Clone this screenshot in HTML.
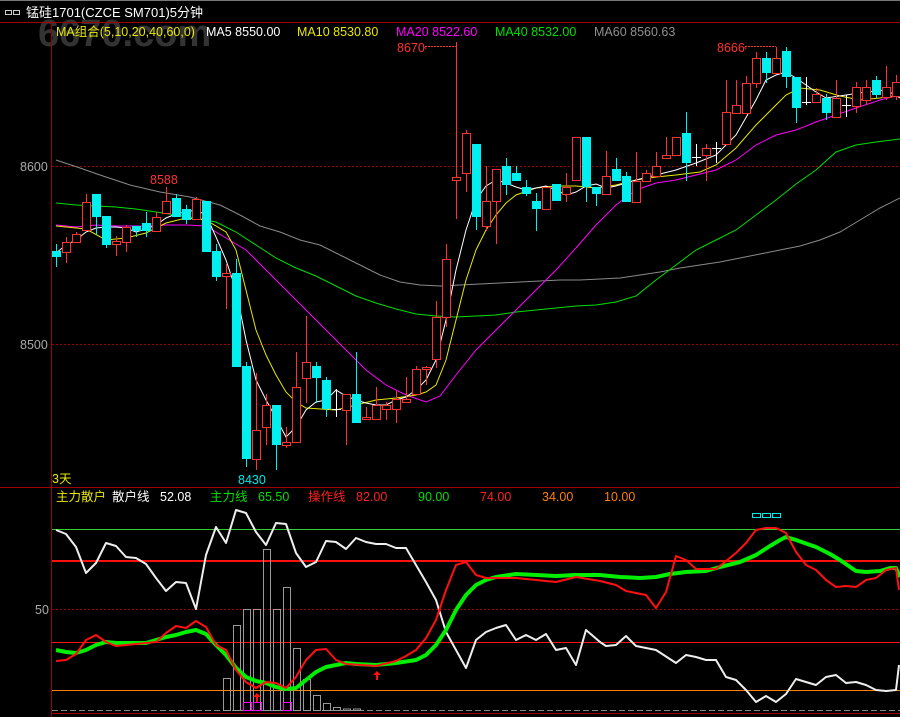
<!DOCTYPE html>
<html><head><meta charset="utf-8"><style>
html,body{margin:0;padding:0;background:#000;width:900px;height:717px;overflow:hidden}
svg{display:block}
text{font-family:"Liberation Sans","Noto Sans CJK SC",sans-serif;font-size:12.5px}
</style></head><body>
<svg width="900" height="717" viewBox="0 0 900 717" xmlns="http://www.w3.org/2000/svg">
<rect width="900" height="717" fill="#000"/>
<text x="38" y="46" fill="#333" style="font-size:38px;font-weight:bold">6670.com</text>
<rect x="0" y="0" width="900" height="1" fill="#777"/>
<g fill="none" stroke="#ccc"><rect x="5.5" y="10.5" width="6" height="4"/><rect x="13.5" y="10.5" width="6" height="4"/></g>
<text x="26" y="17" fill="#fff" style="font-size:13px">锰硅1701(CZCE SM701)5分钟</text>
<rect x="0" y="22" width="900" height="1" fill="#a00000"/>
<rect x="51" y="22" width="1" height="695" fill="#a00000"/>
<rect x="0" y="487" width="900" height="1" fill="#a00000"/>
<rect x="51" y="713" width="849" height="1" fill="#a00000"/>
<text x="56" y="36" fill="#e8e800">MA组合(5,10,20,40,60,0)</text>
<text x="206" y="36" fill="#fff">MA5 8550.00</text>
<text x="297" y="36" fill="#e8e800">MA10 8530.80</text>
<text x="396" y="36" fill="#ff00ff">MA20 8522.60</text>
<text x="495" y="36" fill="#00e000">MA40 8532.00</text>
<text x="594" y="36" fill="#909090">MA60 8560.63</text>
<g stroke="#a00000" stroke-dasharray="2,2">
<line x1="52" y1="166.5" x2="900" y2="166.5"/><line x1="52" y1="344.5" x2="900" y2="344.5"/>
<line x1="52" y1="609.5" x2="900" y2="609.5"/>
</g>
<text x="20" y="171" fill="#aaa">8600</text>
<text x="20" y="349" fill="#aaa">8500</text>
<text x="35" y="614" fill="#aaa">50</text>
<g fill="none" stroke-width="1">
<polyline stroke="#8a8a8a" points="56,160 80,168 100,175 130,185 160,192 190,197 220,205 240,215 260,226 280,232 300,240 320,245 340,255 360,265 380,275 400,282 420,285 440,286 460,285 480,284 500,283 520,282 540,281 560,280 580,280 600,279 620,278 640,275 660,272 680,268 700,265 720,262 740,258 760,254 780,250 800,246 820,240 840,232 860,220 880,208 900,198"/>
<polyline stroke="#00e000" points="56,203 76,205 96,206 116,207 136,209 156,212 176,215 196,218 216,222 236,232 256,245 276,258 296,268 316,276 336,286 356,296 376,303 396,309 416,314 436,316 456,317 476,316 496,315 516,312 536,310 556,308 576,306 596,305 616,302 636,296 656,280 676,265 696,250 716,240 736,230 756,215 776,200 796,184 816,170 836,152 856,145 876,142 900,139"/>
<polyline stroke="#ff00ff" points="56,225 76,227 96,225 116,226 146,226 166,225 186,225 206,226 216,232 226,238 246,250 266,270 286,290 306,310 326,330 346,350 366,370 386,385 406,395 426,402 440,396 456,375 476,350 496,330 516,310 536,290 556,270 576,248 596,225 616,205 636,190 656,183 676,180 696,175 716,170 736,160 756,145 776,135 796,130 816,122 836,115 856,108 880,100 900,95"/>
<polyline stroke="#e8e800" points="56,226 86,229 106,240 126,238 146,233 166,223 186,218 206,220 226,232 236,250 246,290 256,330 266,355 276,375 286,392 296,402 306,408 336,410 356,405 376,400 396,398 416,395 426,392 436,385 446,360 456,320 466,280 476,250 486,230 496,215 506,203 516,195 536,188 556,186 576,186 596,188 616,185 636,180 656,177 676,175 700,172 716,165 736,148 756,125 776,105 786,95 800,88 820,90 840,96 860,100 880,98 900,95"/>
<polyline stroke="#fff" points="56,253 66,245 76,240 86,232 96,228 106,227 116,227 126,228 136,232 146,229 156,225 166,218 176,214 186,212 196,210 206,215 216,237 226,260 236,290 246,340 256,380 266,400 276,418 286,437 296,427 306,410 316,402 326,400 336,390 346,396 356,400 366,403 376,405 386,405 396,400 406,397 416,390 426,380 436,360 446,320 456,270 466,230 476,200 486,186 496,180 506,183 516,187 526,190 536,188 546,186 556,190 566,195 576,192 586,186 596,184 606,188 616,186 636,180 656,175 676,170 696,163 716,155 736,135 756,100 766,80 776,75 786,72 796,78 806,85 816,92 826,98 846,95 866,92 886,90 900,98"/>
</g>
<g shape-rendering="crispEdges">
<g stroke="#00f0f0" fill="#00f0f0">
<line x1="56.5" y1="244" x2="56.5" y2="267"/><rect x="52.5" y="251.5" width="8" height="5"/>
<line x1="96.5" y1="194" x2="96.5" y2="235"/><rect x="92.5" y="194.5" width="8" height="22"/>
<line x1="106.5" y1="216" x2="106.5" y2="248"/><rect x="102.5" y="216.5" width="8" height="28"/>
<line x1="136.5" y1="226" x2="136.5" y2="237"/><rect x="132.5" y="226.5" width="8" height="4"/>
<line x1="146.5" y1="212" x2="146.5" y2="237"/><rect x="142.5" y="223.5" width="8" height="7"/>
<line x1="176.5" y1="194" x2="176.5" y2="217"/><rect x="172.5" y="198.5" width="8" height="18"/>
<line x1="186.5" y1="205" x2="186.5" y2="224"/><rect x="182.5" y="209.5" width="8" height="10"/>
<line x1="206.5" y1="201" x2="206.5" y2="252"/><rect x="202.5" y="201.5" width="8" height="50"/>
<line x1="216.5" y1="244" x2="216.5" y2="281"/><rect x="212.5" y="251.5" width="8" height="25"/>
<line x1="236.5" y1="259" x2="236.5" y2="367"/><rect x="232.5" y="273.5" width="8" height="93"/>
<line x1="246.5" y1="362" x2="246.5" y2="467"/><rect x="242.5" y="366.5" width="8" height="92"/>
<line x1="276.5" y1="405" x2="276.5" y2="470"/><rect x="272.5" y="405.5" width="8" height="39"/>
<line x1="316.5" y1="362" x2="316.5" y2="403"/><rect x="312.5" y="366.5" width="8" height="11"/>
<line x1="326.5" y1="377" x2="326.5" y2="417"/><rect x="322.5" y="380.5" width="8" height="28"/>
<line x1="356.5" y1="352" x2="356.5" y2="423"/><rect x="352.5" y="394.5" width="8" height="28"/>
<line x1="476.5" y1="144" x2="476.5" y2="230"/><rect x="472.5" y="144.5" width="8" height="72"/>
<line x1="506.5" y1="158" x2="506.5" y2="195"/><rect x="502.5" y="166.5" width="8" height="18"/>
<line x1="516.5" y1="166" x2="516.5" y2="181"/><rect x="512.5" y="173.5" width="8" height="7"/>
<line x1="526.5" y1="180" x2="526.5" y2="196"/><rect x="522.5" y="187.5" width="8" height="6"/>
<line x1="536.5" y1="193" x2="536.5" y2="231"/><rect x="532.5" y="201.5" width="8" height="7"/>
<line x1="556.5" y1="184" x2="556.5" y2="201"/><rect x="552.5" y="184.5" width="8" height="16"/>
<line x1="586.5" y1="137" x2="586.5" y2="202"/><rect x="582.5" y="137.5" width="8" height="49"/>
<line x1="596.5" y1="187" x2="596.5" y2="206"/><rect x="592.5" y="187.5" width="8" height="6"/>
<line x1="616.5" y1="158" x2="616.5" y2="181"/><rect x="612.5" y="169.5" width="8" height="11"/>
<line x1="626.5" y1="172" x2="626.5" y2="202"/><rect x="622.5" y="176.5" width="8" height="25"/>
<line x1="686.5" y1="112" x2="686.5" y2="181"/><rect x="682.5" y="133.5" width="8" height="29"/>
<line x1="766.5" y1="52" x2="766.5" y2="83"/><rect x="762.5" y="58.5" width="8" height="14"/>
<line x1="786.5" y1="47" x2="786.5" y2="88"/><rect x="782.5" y="51.5" width="8" height="25"/>
<line x1="796.5" y1="77" x2="796.5" y2="123"/><rect x="792.5" y="77.5" width="8" height="30"/>
<line x1="826.5" y1="94" x2="826.5" y2="120"/><rect x="822.5" y="98.5" width="8" height="14"/>
<line x1="876.5" y1="76" x2="876.5" y2="98"/><rect x="872.5" y="80.5" width="8" height="14"/>
</g>
<g stroke="#ff3232" fill="#000">
<line x1="66.5" y1="237" x2="66.5" y2="263"/><rect x="62.5" y="242.5" width="8" height="10"/>
<line x1="76.5" y1="232" x2="76.5" y2="242"/><rect x="72.5" y="234.5" width="8" height="8"/>
<line x1="86.5" y1="194" x2="86.5" y2="231"/><rect x="82.5" y="202.5" width="8" height="28"/>
<line x1="116.5" y1="236" x2="116.5" y2="256"/><rect x="112.5" y="241.5" width="8" height="3"/>
<line x1="126.5" y1="225" x2="126.5" y2="252"/><rect x="122.5" y="227.5" width="8" height="15"/>
<line x1="156.5" y1="212" x2="156.5" y2="231"/><rect x="152.5" y="217.5" width="8" height="14"/>
<line x1="166.5" y1="187" x2="166.5" y2="213"/><rect x="162.5" y="201.5" width="8" height="12"/>
<line x1="196.5" y1="197" x2="196.5" y2="219"/><rect x="192.5" y="199.5" width="8" height="20"/>
<line x1="226.5" y1="264" x2="226.5" y2="309"/><rect x="222.5" y="273.5" width="8" height="3"/>
<line x1="256.5" y1="373" x2="256.5" y2="470"/><rect x="252.5" y="430.5" width="8" height="29"/>
<line x1="266.5" y1="394" x2="266.5" y2="445"/><rect x="262.5" y="405.5" width="8" height="22"/>
<line x1="286.5" y1="427" x2="286.5" y2="448"/><rect x="282.5" y="442.5" width="8" height="3"/>
<line x1="296.5" y1="352" x2="296.5" y2="442"/><rect x="292.5" y="387.5" width="8" height="55"/>
<line x1="306.5" y1="316" x2="306.5" y2="403"/><rect x="302.5" y="362.5" width="8" height="16"/>
<line x1="346.5" y1="394" x2="346.5" y2="445"/><rect x="342.5" y="394.5" width="8" height="16"/>
<line x1="366.5" y1="407" x2="366.5" y2="420"/><rect x="362.5" y="417.5" width="8" height="2"/>
<line x1="376.5" y1="387" x2="376.5" y2="419"/><rect x="372.5" y="405.5" width="8" height="14"/>
<line x1="386.5" y1="402" x2="386.5" y2="420"/><rect x="382.5" y="405.5" width="8" height="4"/>
<line x1="396.5" y1="391" x2="396.5" y2="423"/><rect x="392.5" y="399.5" width="8" height="10"/>
<line x1="406.5" y1="377" x2="406.5" y2="402"/><rect x="402.5" y="399.5" width="8" height="3"/>
<line x1="416.5" y1="366" x2="416.5" y2="394"/><rect x="412.5" y="369.5" width="8" height="25"/>
<line x1="426.5" y1="366" x2="426.5" y2="385"/><rect x="422.5" y="367.5" width="8" height="2"/>
<line x1="436.5" y1="301" x2="436.5" y2="368"/><rect x="432.5" y="317.5" width="8" height="42"/>
<line x1="446.5" y1="244" x2="446.5" y2="327"/><rect x="442.5" y="259.5" width="8" height="58"/>
<line x1="456.5" y1="42" x2="456.5" y2="219"/><rect x="452.5" y="177.5" width="8" height="3"/>
<line x1="466.5" y1="130" x2="466.5" y2="192"/><rect x="462.5" y="133.5" width="8" height="40"/>
<line x1="486.5" y1="166" x2="486.5" y2="231"/><rect x="482.5" y="201.5" width="8" height="25"/>
<line x1="496.5" y1="169" x2="496.5" y2="244"/><rect x="492.5" y="169.5" width="8" height="32"/>
<line x1="546.5" y1="187" x2="546.5" y2="209"/><rect x="542.5" y="187.5" width="8" height="22"/>
<line x1="566.5" y1="173" x2="566.5" y2="202"/><rect x="562.5" y="187.5" width="8" height="7"/>
<line x1="576.5" y1="137" x2="576.5" y2="180"/><rect x="572.5" y="137.5" width="8" height="43"/>
<line x1="606.5" y1="151" x2="606.5" y2="194"/><rect x="602.5" y="176.5" width="8" height="18"/>
<line x1="636.5" y1="152" x2="636.5" y2="202"/><rect x="632.5" y="181.5" width="8" height="21"/>
<line x1="646.5" y1="170" x2="646.5" y2="181"/><rect x="642.5" y="173.5" width="8" height="8"/>
<line x1="656.5" y1="152" x2="656.5" y2="176"/><rect x="652.5" y="166.5" width="8" height="10"/>
<line x1="666.5" y1="137" x2="666.5" y2="158"/><rect x="662.5" y="155.5" width="8" height="3"/>
<line x1="676.5" y1="137" x2="676.5" y2="155"/><rect x="672.5" y="137.5" width="8" height="18"/>
<line x1="706.5" y1="144" x2="706.5" y2="181"/><rect x="702.5" y="148.5" width="8" height="7"/>
<line x1="726.5" y1="80" x2="726.5" y2="144"/><rect x="722.5" y="112.5" width="8" height="32"/>
<line x1="736.5" y1="80" x2="736.5" y2="113"/><rect x="732.5" y="105.5" width="8" height="8"/>
<line x1="746.5" y1="76" x2="746.5" y2="113"/><rect x="742.5" y="83.5" width="8" height="30"/>
<line x1="756.5" y1="52" x2="756.5" y2="88"/><rect x="752.5" y="58.5" width="8" height="25"/>
<line x1="776.5" y1="47" x2="776.5" y2="73"/><rect x="772.5" y="58.5" width="8" height="15"/>
<line x1="816.5" y1="88" x2="816.5" y2="102"/><rect x="812.5" y="94.5" width="8" height="8"/>
<line x1="836.5" y1="80" x2="836.5" y2="117"/><rect x="832.5" y="98.5" width="8" height="19"/>
<line x1="856.5" y1="82" x2="856.5" y2="113"/><rect x="852.5" y="87.5" width="8" height="19"/>
<line x1="866.5" y1="80" x2="866.5" y2="105"/><rect x="862.5" y="87.5" width="8" height="13"/>
<line x1="886.5" y1="66" x2="886.5" y2="100"/><rect x="882.5" y="87.5" width="8" height="10"/>
<line x1="896.5" y1="75" x2="896.5" y2="100"/><rect x="892.5" y="82.5" width="8" height="14"/>
</g>
<g stroke="#fff">
<line x1="336.5" y1="389" x2="336.5" y2="417"/><line x1="332" y1="409.5" x2="341" y2="409.5"/>
<line x1="696.5" y1="144" x2="696.5" y2="166"/><line x1="692" y1="157.5" x2="701" y2="157.5"/>
<line x1="716.5" y1="142" x2="716.5" y2="163"/><line x1="712" y1="148.5" x2="721" y2="148.5"/>
<line x1="806.5" y1="77" x2="806.5" y2="105"/><line x1="802" y1="102.5" x2="811" y2="102.5"/>
<line x1="846.5" y1="95" x2="846.5" y2="117"/><line x1="842" y1="105.5" x2="851" y2="105.5"/>
</g>
</g>
<text x="397" y="52" fill="#ff3232">8670</text>
<line x1="425" y1="46.5" x2="456" y2="46.5" stroke="#ff3232" stroke-dasharray="2,1"/><text x="424" y="50" fill="#ff3232" style="font-size:9px">‹</text>
<text x="717" y="52" fill="#ff3232">8666</text>
<line x1="745" y1="46.5" x2="776" y2="46.5" stroke="#ff3232" stroke-dasharray="2,1"/><text x="744" y="50" fill="#ff3232" style="font-size:9px">‹</text>
<text x="150" y="184" fill="#ff3232">8588</text>
<text x="238" y="484" fill="#00e8e8">8430</text>
<text x="52" y="483" fill="#e8e800">3天</text>
<text x="56" y="501" fill="#e8e800">主力散户</text>
<text x="112" y="501" fill="#fff">散户线</text>
<text x="160" y="501" fill="#fff">52.08</text>
<text x="210" y="501" fill="#00e000">主力线</text>
<text x="258" y="501" fill="#00e000">65.50</text>
<text x="308" y="501" fill="#ff2020">操作线</text>
<text x="356" y="501" fill="#ff2020">82.00</text>
<text x="418" y="501" fill="#00e000">90.00</text>
<text x="480" y="501" fill="#ff2020">74.00</text>
<text x="542" y="501" fill="#ff8000">34.00</text>
<text x="604" y="501" fill="#ff8000">10.00</text>
<g fill="none" stroke="#00e8e8"><rect x="752.5" y="513.5" width="8" height="4"/><rect x="762.5" y="513.5" width="8" height="4"/><rect x="772.5" y="513.5" width="8" height="4"/></g>
<line x1="52" y1="529.5" x2="900" y2="529.5" stroke="#30d030"/>
<line x1="52" y1="561" x2="900" y2="561" stroke="#ff1010" stroke-width="2"/>
<line x1="52" y1="642.5" x2="900" y2="642.5" stroke="#ff1010"/>
<line x1="52" y1="690.5" x2="900" y2="690.5" stroke="#ff8000"/>
<line x1="52" y1="710.5" x2="900" y2="710.5" stroke="#888" stroke-dasharray="6,3"/>
<g fill="none" stroke="#999" shape-rendering="crispEdges">
<rect x="223.5" y="678.5" width="7" height="32"/><rect x="233.5" y="625.5" width="7" height="85"/>
<rect x="243.5" y="609.5" width="7" height="101"/><rect x="253.5" y="609.5" width="7" height="101"/>
<rect x="263.5" y="549.5" width="7" height="161"/><rect x="273.5" y="609.5" width="7" height="101"/>
<rect x="283.5" y="587.5" width="7" height="123"/><rect x="293.5" y="648.5" width="7" height="62"/>
<rect x="303.5" y="679.5" width="7" height="31"/><rect x="313.5" y="695.5" width="7" height="15"/>
<rect x="323.5" y="703.5" width="7" height="7"/><rect x="333.5" y="707.5" width="7" height="3"/>
<rect x="343.5" y="709" width="7" height="1.5"/><rect x="353.5" y="709" width="7" height="1.5"/>
</g>
<g fill="none" stroke="#ff00ff" shape-rendering="crispEdges">
<rect x="243.5" y="702.5" width="8" height="8"/><rect x="253.5" y="702.5" width="8" height="8"/><rect x="283.5" y="702.5" width="8" height="8"/>
</g>
<g fill="none" stroke-linejoin="round">
<polyline stroke="#eee" stroke-width="2" points="56,530 66,534 76,547 86,573 96,563 106,543 116,546 126,557 136,558 146,564 156,578 166,591 176,582 186,583 196,609 206,555 216,527 226,543 236,510 246,513 256,532 266,545 276,523 286,524 296,553 306,567 316,562 326,541 336,542 346,549 356,538 366,542 376,544 386,544 396,548 406,548 416,565 426,582 436,600 446,632 456,650 466,668 476,640 486,632 496,628 506,625 516,640 526,635 536,640 546,634 556,650 566,648 576,665 586,630 600,642 606,646 616,645 626,636 636,646 656,650 676,663 686,655 696,657 706,660 716,660 726,677 736,680 746,690 756,702 766,696 776,702 786,694 796,679 806,682 816,685 826,677 836,675 846,683 856,682 866,685 876,690 886,691 896,690 899,665"/>
<polyline stroke="#00ee00" stroke-width="4" points="56,650 66,652 76,653 86,650 96,645 106,642 116,643 146,643 156,640 166,637 176,635 186,632 196,630 206,634 216,645 226,655 236,668 246,677 256,681 266,683 276,687 286,689 296,688 306,680 316,672 326,667 336,665 346,663 356,664 376,665 396,663 416,660 426,655 436,645 446,630 456,610 466,595 476,585 486,580 496,577 516,574 536,575 556,576 576,575 600,575 620,577 640,578 656,577 670,574 686,572 706,571 720,567 740,562 756,555 770,546 780,540 786,537 796,540 816,547 830,554 840,560 856,571 866,572 880,571 890,568 896,568 900,577"/>
<polyline stroke="#ff1010" stroke-width="2" points="56,661 66,660 76,654 86,640 96,635 106,642 116,646 146,643 156,642 166,633 176,626 186,628 196,621 206,627 216,645 226,650 236,670 246,682 256,688 266,682 276,683 286,688 296,677 306,660 316,650 326,649 336,660 346,664 376,666 396,661 406,656 416,650 426,638 436,620 446,590 456,565 466,562 476,575 486,578 516,578 536,580 556,582 576,577 600,581 616,585 626,591 646,595 656,608 666,592 676,556 686,560 696,569 716,569 736,553 746,543 756,530 766,528 776,528 786,533 796,552 806,565 816,570 826,580 836,587 846,586 856,587 866,580 876,578 886,570 896,568 899,590"/>
</g>
<g fill="#ff1010">
<path d="M257 693 l-4 4 h3 v5 h2 v-5 h3 z"/>
<path d="M377 671 l-4 4 h3 v5 h2 v-5 h3 z"/>
</g>
</svg>
</body></html>
